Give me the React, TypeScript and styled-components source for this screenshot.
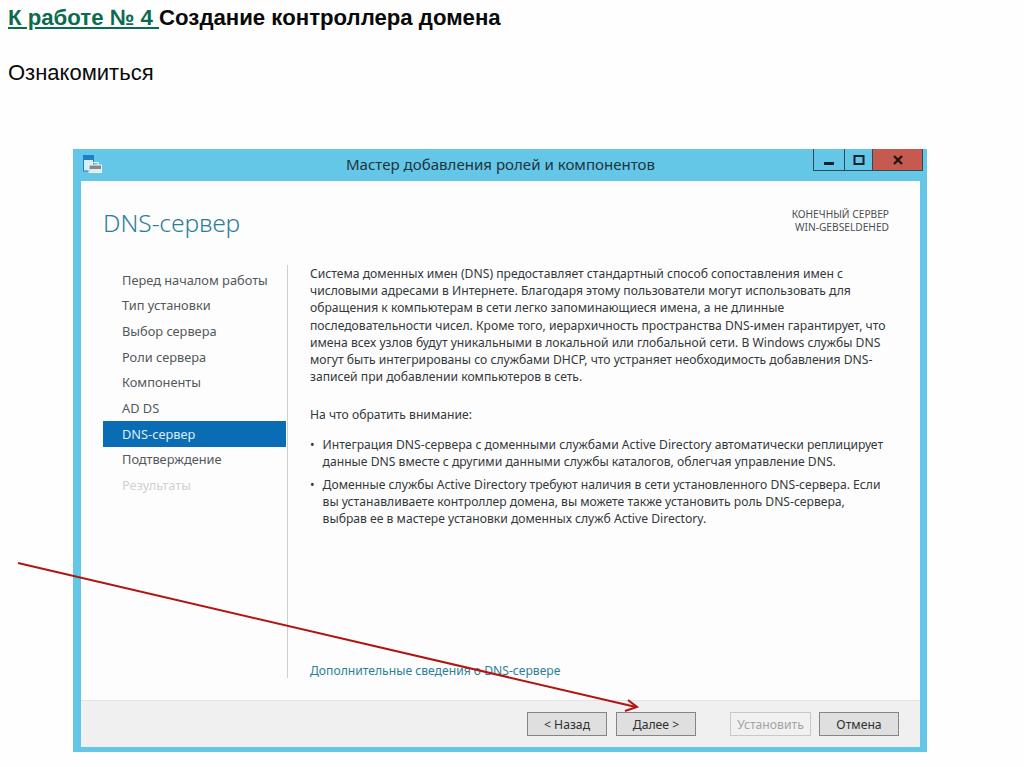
import React from "react";
import styled, { createGlobalStyle } from "styled-components";

const Global = createGlobalStyle`
  html, body { margin: 0; padding: 0; background: #fefefe; }
  body { width: 1024px; height: 767px; overflow: hidden; font-family: "Liberation Sans", Arial, sans-serif; }
  * { box-sizing: border-box; }
`;

const Slide = styled.div`
  position: relative;
  width: 1024px;
  height: 767px;
  padding: 6px 0 0 8px;
`;
const Heading = styled.h1`
  margin: 0;
  font: bold 22.2px/24px "Liberation Sans", Arial, sans-serif;
  color: #0a0a0a;
  white-space: pre;
`;
const HeadingLink = styled.span`
  color: #0c6b4e;
  text-decoration: underline;
`;
const Sub = styled.p`
  margin: 31px 0 0;
  font: 22px/24px "Liberation Sans", Arial, sans-serif;
  color: #0a0a0a;
`;
const Win = styled.div`
  margin: 64px 0 0 65px;
  width: 854px;
  height: 603px;
  background: #65c7e8;
  padding: 0 7px 5px 8px;
  display: flex;
  flex-direction: column;
`;
const TitleBar = styled.div`
  height: 32px;
  flex: none;
  display: flex;
  position: relative;
  align-items: center;
  justify-content: center;
  padding-bottom: 2px;
  font: 15.07px "Noto Sans", sans-serif;
  color: #20343c;
`;
const AppIcon = styled.svg`
  position: absolute;
  left: 2px;
  top: 6px;
`;
const Controls = styled.div`
  position: absolute;
  right: -3px;
  top: 0;
  display: flex;
  height: 22px;
  border: solid #2f4a55;
  border-width: 0 1px 1px;
`;
const Ctl = styled.div<{ $w: number; $bg?: string }>`
  width: ${(p) => p.$w}px;
  background: ${(p) => p.$bg || "transparent"};
  display: flex;
  align-items: center;
  justify-content: center;
  & + & { border-left: 1px solid #2f4a55; }
`;
const Body = styled.div`
  flex: 1;
  min-height: 0;
  background: #fdfdfd;
  display: flex;
  flex-direction: column;
`;
const Top = styled.div`
  height: 84px;
  flex: none;
  padding: 25px 31px 0 22px;
  display: flex;
  justify-content: space-between;
`;
const PageTitle = styled.div`
  font: 300 24.5px/34px "Noto Sans", sans-serif;
  color: #2e7d98;
`;
const Target = styled.div`
  margin-top: 2px;
  text-align: right;
  font: 10.2px/13px "Noto Sans", sans-serif;
  color: #4a4f52;
`;
const Main = styled.div`
  flex: 1;
  min-height: 0;
  display: flex;
  padding: 0 0 22px 22px;
`;
const Nav = styled.div`
  width: 183px;
  flex: none;
  padding-top: 1.7px;
`;
const NavItem = styled.div<{ $active?: boolean; $off?: boolean }>`
  height: 25.7px;
  padding-left: 19px;
  display: flex;
  align-items: center;
  font: 12.8px "Noto Sans", sans-serif;
  white-space: nowrap;
  background: ${(p) => (p.$active ? "#0a6cb4" : "transparent")};
  color: ${(p) => (p.$active ? "#dcecf6" : p.$off ? "#cfd2d4" : "#53585b")};
`;
const Content = styled.div`
  flex: 1;
  border-left: 1px solid #cfcfcf;
  margin-left: 1px;
  padding-left: 22px;
  display: flex;
  flex-direction: column;
  font: 12.15px/17.2px "Noto Sans", sans-serif;
  color: #33383b;
  white-space: nowrap;
`;
const Para = styled.div`
  margin-bottom: 21px;
`;
const Lead = styled.div`
  margin-bottom: 12px;
`;
const BulletList = styled.div`
  display: flex;
  flex-direction: column;
  gap: 6px;
`;
const Bullet = styled.div`
  display: flex;
  gap: 8px;
  &::before { content: "•"; }
`;
const More = styled.div`
  margin-top: auto;
  color: #2a7f9c;
  margin-bottom: -1px;
`;
const Footer = styled.div`
  height: 47px;
  flex: none;
  background: #f0f0f0;
  border-top: 1px solid #e4e4e4;
  display: flex;
  align-items: flex-start;
  padding: 11px 21px 0 0;
  justify-content: flex-end;
`;
const Btn = styled.div<{ $off?: boolean; $gap?: number }>`
  width: ${(p) => (p.$off ? 81 : 80)}px;
  height: 24px;
  margin-left: ${(p) => p.$gap ?? 0}px;
  background: ${(p) => (p.$off ? "#f1f1f1" : "#dfdfdf")};
  border: 1px solid ${(p) => (p.$off ? "#c8c8c8" : "#858585")};
  color: ${(p) => (p.$off ? "#a4a4a4" : "#303030")};
  font: 12.2px "Noto Sans", sans-serif;
  display: flex;
  align-items: center;
  justify-content: center;
`;
const Arrow = styled.svg`
  position: absolute;
  left: 0;
  top: 0;
  pointer-events: none;
`;

const nav = ["Перед началом работы", "Тип установки", "Выбор сервера", "Роли сервера", "Компоненты", "AD DS", "DNS-сервер", "Подтверждение", "Результаты"];

export default function App() {
  return (
    <Slide>
      <Global />
      <Heading><HeadingLink>К работе № 4 </HeadingLink>Создание контроллера домена</Heading>
      <Sub>Ознакомиться</Sub>
      <Win>
        <TitleBar>
          <AppIcon width="19" height="18" viewBox="0 0 19 18">
            <rect x="0.5" y="0.5" width="10" height="15.5" fill="#d7ecf7" stroke="#1f7fc4" />
            <rect x="1" y="1" width="9" height="4" fill="#1f7fc4" />
            <rect x="6" y="10" width="12.5" height="7.5" fill="#7d8a94" stroke="#eef7fa" />
            <path d="M9.5 10V7.5h5.5V10" fill="none" stroke="#eef7fa" strokeWidth="1.2" />
            <rect x="6.5" y="14" width="11.5" height="3.5" fill="#e4ecef" />
          </AppIcon>
          Мастер добавления ролей и компонентов
          <Controls>
            <Ctl $w={30}><svg width="12" height="12" viewBox="0 0 12 12"><rect x="1" y="8" width="10" height="3" fill="#12232b" /></svg></Ctl>
            <Ctl $w={28}><svg width="12" height="12" viewBox="0 0 12 12"><rect x="1.5" y="2" width="9" height="8" fill="none" stroke="#12232b" strokeWidth="2" /></svg></Ctl>
            <Ctl $w={50} $bg="#c75a50"><svg width="12" height="12" viewBox="0 0 12 12"><path d="M2 2l8 8M10 2l-8 8" stroke="#1d1512" strokeWidth="2.4" /></svg></Ctl>
          </Controls>
        </TitleBar>
        <Body>
          <Top>
            <PageTitle>DNS-сервер</PageTitle>
            <Target>КОНЕЧНЫЙ СЕРВЕР<br />WIN-GEBSELDEHED</Target>
          </Top>
          <Main>
            <Nav>
              {nav.map((n, i) => (
                <NavItem key={n} $active={i === 6} $off={i === 8}>{n}</NavItem>
              ))}
            </Nav>
            <Content>
              <Para>
                Система доменных имен (DNS) предоставляет стандартный способ сопоставления имен с<br />
                числовыми адресами в Интернете. Благодаря этому пользователи могут использовать для<br />
                обращения к компьютерам в сети легко запоминающиеся имена, а не длинные<br />
                последовательности чисел. Кроме того, иерархичность пространства DNS-имен гарантирует, что<br />
                имена всех узлов будут уникальными в локальной или глобальной сети. В Windows службы DNS<br />
                могут быть интегрированы со службами DHCP, что устраняет необходимость добавления DNS-<br />
                записей при добавлении компьютеров в сеть.
              </Para>
              <Lead>На что обратить внимание:</Lead>
              <BulletList>
                <Bullet><div>Интеграция DNS-сервера с доменными службами Active Directory автоматически реплицирует<br />данные DNS вместе с другими данными службы каталогов, облегчая управление DNS.</div></Bullet>
                <Bullet><div>Доменные службы Active Directory требуют наличия в сети установленного DNS-сервера. Если<br />вы устанавливаете контроллер домена, вы можете также установить роль DNS-сервера,<br />выбрав ее в мастере установки доменных служб Active Directory.</div></Bullet>
              </BulletList>
              <More>Дополнительные сведения о DNS-сервере</More>
            </Content>
          </Main>
          <Footer>
            <Btn>&lt; Назад</Btn>
            <Btn $gap={9}>Далее &gt;</Btn>
            <Btn $off $gap={34}>Установить</Btn>
            <Btn $gap={8}>Отмена</Btn>
          </Footer>
        </Body>
      </Win>
      <Arrow width="1024" height="767" viewBox="0 0 1024 767">
        <path d="M18 563L636 707" stroke="#b2140f" strokeWidth="2" fill="none" />
        <path d="M628 700L637 707L625 711" stroke="#b2140f" strokeWidth="2" fill="none" />
      </Arrow>
    </Slide>
  );
}
